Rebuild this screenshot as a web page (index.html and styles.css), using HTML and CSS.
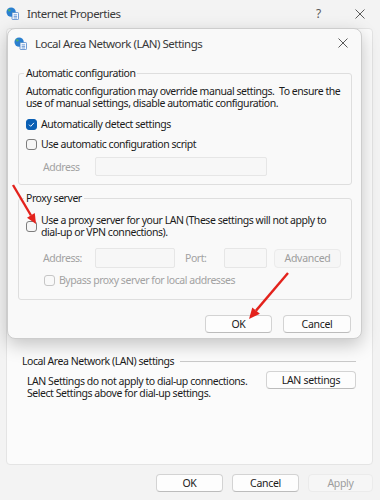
FILE: index.html
```html
<!DOCTYPE html>
<html lang="en">
<head>
    <meta charset="UTF-8">
    <title>Internet Properties</title>
    <link rel="stylesheet" href="styles.css">
</head>
<body>
    <div class="window">
        <div class="titlebar">
            <svg class="app-icon" viewBox="0 0 14 14">
                <circle cx="5.5" cy="5.5" r="5" fill="#2a7fd0"/>
                <path d="M2 2.8 q2 -1.2 3.2 0.6 q-0.6 1.8 -2.4 1.4 z M6.5 5.5 q1.5 -0.6 2.8 0.4 q-0.4 1.6 -2 1.6 z" fill="#4fb06a"/>
                <rect x="6.5" y="6" width="7" height="7.5" rx="0.8" fill="#fff" stroke="#3c78c8" stroke-width="0.8"/>
                <path d="M8.2 8.4h3.8M8.2 10.1h3.8M8.2 11.8h3.8" stroke="#3c78c8" stroke-width="0.8"/>
            </svg>
            <span class="title">Internet Properties</span>
            <span class="title-btn">?</span>
            <span class="title-btn">
                <svg class="close-icon" viewBox="0 0 10 10"><path d="M0.5 0.5l9 9M9.5 0.5l-9 9" stroke="#5a5a5a" stroke-width="1"/></svg>
            </span>
        </div>

        <div class="panel">
            <div class="group-head">
                <span>Local Area Network (LAN) settings</span>
                <span class="group-line"></span>
            </div>
            <div class="lan-row">
                <p class="lan-text">LAN Settings do not apply to dial-up connections.<br>Select Settings above for dial-up settings.</p>
                <button class="btn btn-lan">LAN settings</button>
            </div>
        </div>

        <div class="footer">
            <button class="btn">OK</button>
            <button class="btn">Cancel</button>
            <button class="btn btn-disabled btn-apply">Apply</button>
        </div>

        <!-- dialogo superpuesto -->
        <div class="dialog">
            <div class="dialog-titlebar">
                <svg class="app-icon" viewBox="0 0 14 14">
                    <circle cx="5.5" cy="5.5" r="5" fill="#2a7fd0"/>
                    <path d="M2 2.8 q2 -1.2 3.2 0.6 q-0.6 1.8 -2.4 1.4 z M6.5 5.5 q1.5 -0.6 2.8 0.4 q-0.4 1.6 -2 1.6 z" fill="#4fb06a"/>
                    <rect x="6.5" y="6" width="7" height="7.5" rx="0.8" fill="#fff" stroke="#3c78c8" stroke-width="0.8"/>
                    <path d="M8.2 8.4h3.8M8.2 10.1h3.8M8.2 11.8h3.8" stroke="#3c78c8" stroke-width="0.8"/>
                </svg>
                <span class="title">Local Area Network (LAN) Settings</span>
                <span class="dialog-close">
                    <svg class="close-icon" viewBox="0 0 10 10"><path d="M0.5 0.5l9 9M9.5 0.5l-9 9" stroke="#5a5a5a" stroke-width="1"/></svg>
                </span>
            </div>

            <div class="dialog-body">
                <fieldset class="group">
                    <legend>Automatic configuration</legend>
                    <p class="desc">Automatic configuration may override manual settings.&nbsp; To ensure the<br>use of manual settings, disable automatic configuration.</p>
                    <div class="check-row">
                        <span class="box checked">
                            <svg viewBox="0 0 10 10"><path d="M2.3 5.2l1.8 1.8 3.6-3.8" fill="none" stroke="#fff" stroke-width="1.1"/></svg>
                        </span>
                        <span>Automatically detect settings</span>
                    </div>
                    <div class="check-row">
                        <span class="box"></span>
                        <span>Use automatic configuration script</span>
                    </div>
                    <div class="field-row">
                        <span class="field-label disabled">Address</span>
                        <span class="input input-script"></span>
                    </div>
                </fieldset>

                <fieldset class="group group-proxy">
                    <legend>Proxy server</legend>
                    <div class="check-row check-proxy">
                        <span class="box"></span>
                        <span>Use a proxy server for your LAN (These settings will not apply to<br>dial-up or VPN connections).</span>
                    </div>
                    <div class="field-row field-proxy">
                        <span class="field-label disabled">Address:</span>
                        <span class="input input-address"></span>
                        <span class="port-label disabled">Port:</span>
                        <span class="input input-port"></span>
                        <button class="btn btn-disabled btn-advanced">Advanced</button>
                    </div>
                    <div class="check-row check-bypass">
                        <span class="box box-disabled"></span>
                        <span class="disabled">Bypass proxy server for local addresses</span>
                    </div>
                </fieldset>

                <div class="dialog-buttons">
                    <button class="btn">OK</button>
                    <button class="btn">Cancel</button>
                </div>
            </div>
        </div>

        <svg class="arrows" viewBox="0 0 380 500">
            <line x1="13" y1="185" x2="31" y2="215.5" stroke="#e3221c" stroke-width="2.4"/>
            <polygon points="36,224 27,217.7 34.8,213.1" fill="#e3221c"/>
            <line x1="288" y1="273" x2="256" y2="310.6" stroke="#e3221c" stroke-width="2.4"/>
            <polygon points="249,319 252.3,307.4 259.9,313.8" fill="#e3221c"/>
        </svg>
    </div>
</body>
</html>
```

FILE: styles.css
```css
* {
    margin: 0;
    padding: 0;
    box-sizing: border-box;
}

body {
    width: 380px;
    height: 500px;
    overflow: hidden;
    font-family: 'Noto Sans', 'Open Sans', sans-serif;
    font-size: 10.5px;
    letter-spacing: -0.45px;
    color: #1b1b1b;
    background-color: #f3f3f3;
}

.window {
    position: relative;
    height: 500px;
    background-color: #f3f3f3;
}

.titlebar {
    display: flex;
    align-items: center;
    height: 27px;
    padding-left: 6px;
}

.app-icon {
    width: 13px;
    height: 13px;
    margin-right: 8px;
    flex-shrink: 0;
}

.title {
    flex: 1;
    font-size: 11.5px;
    letter-spacing: -0.5px;
    color: #3a3a3a;
}

.title-btn {
    width: 41px;
    display: flex;
    justify-content: center;
    align-items: center;
    color: #5a5a5a;
    font-size: 12px;
}

.close-icon {
    width: 10px;
    height: 10px;
}

.panel {
    margin: 1px 7px 0 6px;
    height: 437px;
    background-color: #fbfbfb;
    border: 1px solid #e4e4e4;
    border-radius: 4px;
    padding: 325px 16px 0 15px;
}

.group-head {
    display: flex;
    align-items: center;
    line-height: 14px;
}

.group-line {
    flex: 1;
    height: 1px;
    background-color: #c9c9c9;
    margin-left: 6px;
}

.lan-row {
    display: flex;
    justify-content: space-between;
    align-items: flex-start;
    margin-top: 3px;
    padding-left: 5px;
}

.lan-text {
    line-height: 12px;
    margin-top: 4px;
    white-space: nowrap;
}

.btn {
    height: 18px;
    width: 67px;
    background-color: #fdfdfd;
    border: 1px solid #d3d3d3;
    border-bottom-color: #bcbcbc;
    border-radius: 4px;
    font-family: inherit;
    font-size: 10.5px;
    letter-spacing: -0.3px;
    color: #1b1b1b;
    line-height: 16px;
}

.btn-lan {
    width: 90px;
}

.btn-disabled {
    background-color: #f6f6f6;
    border-color: #ebebeb;
    color: #9d9d9d;
}

.footer {
    display: flex;
    justify-content: flex-end;
    gap: 9px;
    padding: 9px 7px 0 0;
}

.btn-apply {
    width: 65px;
}

/* Dialogo LAN */
.dialog {
    position: absolute;
    left: 7px;
    top: 28px;
    width: 355px;
    height: 311px;
    background-color: #f9f9f9;
    border: 1px solid #cdcdcd;
    border-radius: 8px;
    box-shadow: 0 6px 18px rgba(0, 0, 0, 0.22);
}

.dialog-titlebar {
    display: flex;
    align-items: center;
    height: 28px;
    padding-left: 6px;
}

.dialog-close {
    width: 28px;
    display: flex;
    justify-content: center;
    margin-right: 4px;
}

.dialog-body {
    padding: 9px 9px 0 10px;
}

.group {
    border: 1px solid #dedede;
    border-radius: 3px;
    padding: 0 7px 8px 7px;
}

.group legend {
    padding: 0 2px;
    margin-left: -2px;
    line-height: 14px;
}

.group-proxy {
    margin-top: 6px;
    padding-bottom: 11px;
}

.desc {
    margin-top: 5px;
    line-height: 12px;
    white-space: nowrap;
}

.check-row {
    display: flex;
    align-items: center;
    height: 20px;
    margin-top: 5px;
    white-space: nowrap;
}

.check-row + .check-row {
    margin-top: 0;
}

.box {
    width: 11px;
    height: 11px;
    border: 1px solid #7d7d7d;
    border-radius: 3px;
    background-color: #f6f6f6;
    margin-right: 4px;
    flex-shrink: 0;
    display: flex;
}

.box svg {
    width: 100%;
    height: 100%;
}

.box.checked {
    background-color: #0a5fb4;
    border-color: #0a5fb4;
}

.box-disabled {
    border-color: #c6c6c6;
    background-color: #f9f9f9;
}

.check-proxy {
    height: auto;
    margin-top: 9px;
    line-height: 12px;
}

.field-row {
    display: flex;
    align-items: center;
    margin-top: 3px;
    padding-left: 17px;
}

.field-label {
    width: 52px;
}

.disabled {
    color: #a2a2a2;
}

.input {
    height: 19px;
    background-color: #f7f7f7;
    border: 1px solid #e6e6e6;
    border-radius: 2px;
}

.input-script {
    width: 172px;
}

.field-proxy {
    margin-top: 10px;
}

.field-proxy .input {
    height: 20px;
}

.input-address {
    width: 80px;
}

.port-label {
    margin-left: 10px;
    width: 39px;
}

.input-port {
    width: 43px;
}

.btn-advanced {
    margin-left: 7px;
    height: 19px;
}

.check-bypass {
    height: 16px;
    margin-top: 4px;
    padding-left: 18px;
}

.dialog-buttons {
    display: flex;
    justify-content: flex-end;
    gap: 11px;
    margin-top: 15px;
    padding-right: 1px;
}

.dialog-buttons .btn:last-child {
    width: 68px;
}

.arrows {
    position: absolute;
    left: 0;
    top: 0;
    width: 380px;
    height: 500px;
    pointer-events: none;
}
```
